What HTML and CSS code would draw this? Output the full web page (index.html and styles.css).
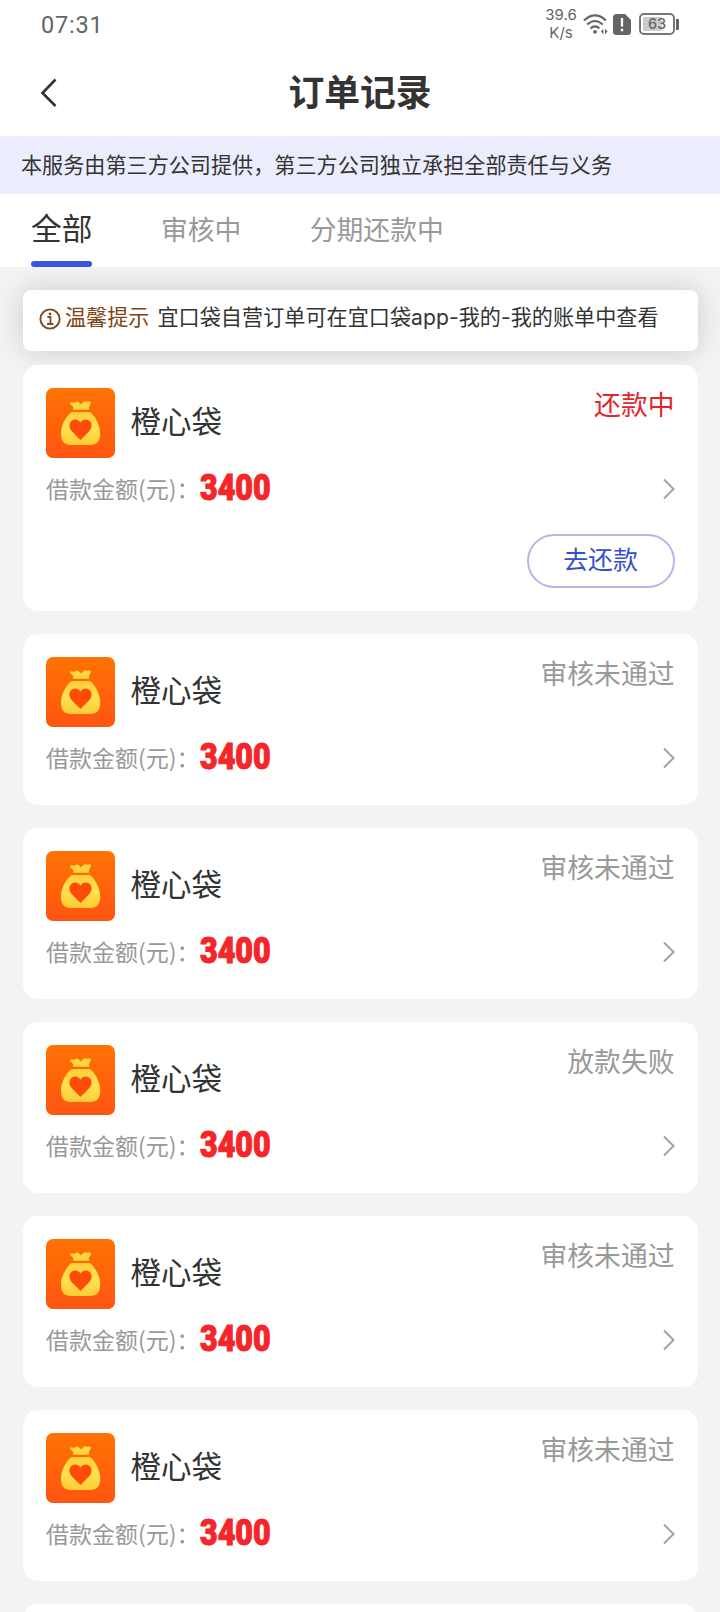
FILE: index.html
```html
<!DOCTYPE html>
<html lang="zh-CN">
<head>
<meta charset="utf-8">
<title>订单记录</title>
<link rel="stylesheet" href="styles.css">
</head>
<body>
<svg class="defs" width="0" height="0">
  <defs>
    <linearGradient id="tile" x1="0" y1="0" x2="0" y2="1"><stop offset="0" stop-color="#ff7303"/><stop offset="1" stop-color="#ff5512"/></linearGradient>
    <linearGradient id="gold" x1="0" y1="0" x2="0" y2="1"><stop offset="0" stop-color="#ffcf38"/><stop offset=".5" stop-color="#ffe250"/><stop offset="1" stop-color="#ffcb32"/></linearGradient>
  </defs>
  <symbol id="bag" viewBox="0 0 69 70">
    <rect width="69" height="70" rx="7" fill="url(#tile)"/>
    <path d="M24.3 16.5Q23.6 14.2 26 14.3Q28.6 15.4 30 13.8Q32 12.6 33.8 15.2Q35.2 17.2 36.8 14.6Q38.8 12.6 41 13.7Q43.6 12.6 44.8 14Q45.2 16.4 43.4 18Q42.4 19.2 43.2 21.8H27Q28.2 18.4 24.3 16.5Z" fill="#ffd53c"/>
    <path d="M26.5 24H43Q44.5 24 45.5 25.2C50.5 30.5 54.2 38 54.2 45.5C54.2 53.5 50.8 57 44 57H25C18.5 57 15 53.5 15 45.5C15 38 18.7 30.5 24 25.2Q25 24 26.5 24Z" fill="url(#gold)"/>
    <path d="M34.5 52L25.8 43.2C22.5 39.6 22.8 35 25.6 32.8C28.5 30.5 32.4 31.2 34.5 34.4C36.6 31.2 40.5 30.5 43.4 32.8C46.2 35 46.5 39.6 43.2 43.2Z" fill="#ff4c08"/>
  </symbol>
  <symbol id="next" viewBox="0 0 14 22"><path d="M2 1.5L11.5 11L2 20.5" fill="none" stroke="#a3a3a3" stroke-width="2"/></symbol>
</svg>
<header class="statusbar">
  <span class="clock">07:31</span>
  <div class="indicators">
    <div class="speed"><span>39.6</span><span>K/s</span></div>
    <svg class="wifi" width="26" height="23" viewBox="0 0 26 23">
      <g fill="none" stroke="#656565" stroke-width="2.1"><path d="M1 7.6Q12 -2.7 23 7.6"/><path d="M4.2 11.6Q12 4.4 19.8 11.6"/><path d="M7.6 15.4Q12 11.2 16.4 15.4"/></g>
      <circle cx="12" cy="18.8" r="1.9" fill="#656565"/><path d="M20.4 15.8v5.4l-2.6-2.6zM22 15.8v5.4l2.6-2.6z" fill="#656565"/>
    </svg>
    <svg class="sim" width="18" height="21" viewBox="0 0 18 21"><path d="M3.5 0H12L18 6V17.5Q18 21 14.5 21H3.5Q0 21 0 17.5V3.5Q0 0 3.5 0Z" fill="#656565"/><path d="M9 4V12.5M9 14.7V17.2" stroke="#fff" stroke-width="2.3"/></svg>
    <div class="battery"><span>63</span></div><i class="cap"></i>
  </div>
</header>
<nav class="titlebar">
  <svg class="back" width="18" height="30" viewBox="0 0 18 30"><path d="M15.5 1.5L2.5 15L15.5 28" fill="none" stroke="#333" stroke-width="2.6"/></svg>
  <h1>订单记录</h1>
</nav>
<p class="notice">本服务由第三方公司提供，第三方公司独立承担全部责任与义务</p>
<div class="tabs">
  <div class="tab active">全部</div><div class="tab">审核中</div><div class="tab">分期还款中</div>
</div>
<main>
  <aside class="tip">
    <svg width="22" height="22" viewBox="0 0 22 22"><circle cx="11" cy="11" r="9.6" fill="none" stroke="#7d4b22" stroke-width="1.9"/><path d="M8.4 9H11.4V16M8 16H14.4" fill="none" stroke="#7d4b22" stroke-width="1.8"/><circle cx="11" cy="5.9" r="1.4" fill="#7d4b22"/></svg>
    <b>温馨提示</b><span class="message">宜口袋自营订单可在宜口袋app-我的-我的账单中查看</span>
  </aside>
  <section class="card first">
    <div class="top"><svg class="logo"><use href="#bag"/></svg><h2>橙心袋</h2><span class="state due">还款中</span></div>
    <div class="row"><span class="label">借款金额(元)：</span><span class="sum">3400</span><svg class="next"><use href="#next"/></svg></div>
    <button class="pay">去还款</button>
  </section>
  <section class="card">
    <div class="top"><svg class="logo"><use href="#bag"/></svg><h2>橙心袋</h2><span class="state">审核未通过</span></div>
    <div class="row"><span class="label">借款金额(元)：</span><span class="sum">3400</span><svg class="next"><use href="#next"/></svg></div>
  </section>
  <section class="card">
    <div class="top"><svg class="logo"><use href="#bag"/></svg><h2>橙心袋</h2><span class="state">审核未通过</span></div>
    <div class="row"><span class="label">借款金额(元)：</span><span class="sum">3400</span><svg class="next"><use href="#next"/></svg></div>
  </section>
  <section class="card">
    <div class="top"><svg class="logo"><use href="#bag"/></svg><h2>橙心袋</h2><span class="state">放款失败</span></div>
    <div class="row"><span class="label">借款金额(元)：</span><span class="sum">3400</span><svg class="next"><use href="#next"/></svg></div>
  </section>
  <section class="card">
    <div class="top"><svg class="logo"><use href="#bag"/></svg><h2>橙心袋</h2><span class="state">审核未通过</span></div>
    <div class="row"><span class="label">借款金额(元)：</span><span class="sum">3400</span><svg class="next"><use href="#next"/></svg></div>
  </section>
  <section class="card">
    <div class="top"><svg class="logo"><use href="#bag"/></svg><h2>橙心袋</h2><span class="state">审核未通过</span></div>
    <div class="row"><span class="label">借款金额(元)：</span><span class="sum">3400</span><svg class="next"><use href="#next"/></svg></div>
  </section>
  <section class="card peek"></section>
</main>
</body>
</html>
```
FILE: styles.css
```css
* { box-sizing: border-box; margin: 0; }
body {
  height: 1612px;
  overflow: hidden;
  display: flex;
  flex-direction: column;
  background: #f3f3f3;
  color: #333;
  font-family: "Noto Sans CJK SC", sans-serif;
  font-weight: 400;
  white-space: nowrap;
}
.defs { display: block; height: 0; flex: none; }
.statusbar {
  flex: none;
  height: 48px;
  padding: 0 41px 0 41px;
  display: flex;
  justify-content: space-between;
  align-items: center;
  background: #fff;
  color: #656565;
  font-family: Roboto, sans-serif;
}
.clock { font-size: 23.5px; letter-spacing: .8px; line-height: 48px; padding-top: 1px; }
.indicators { display: flex; align-items: center; }
.speed {
  display: flex;
  flex-direction: column;
  align-items: center;
  font: 15px/18px Inter, sans-serif;
  width: 32px;
  margin-right: 6px;
  padding-bottom: 1px;
}
.sim { margin-left: 4px; }
.battery {
  margin-left: 8px;
  width: 36px;
  height: 22px;
  border: 2px solid #777;
  border-radius: 5px;
  background: linear-gradient(90deg, #ccc 0 19px, transparent 19px) 2px 2px / 28px 14px no-repeat;
  display: flex;
  align-items: center;
  justify-content: center;
  font: 500 14.5px/14px Inter, sans-serif;
}
.cap { width: 3px; height: 11px; background: #656565; margin-left: 1px; border-radius: 0 1px 1px 0; }
.titlebar {
  flex: none;
  height: 88px;
  display: grid;
  grid-template-columns: 60px 1fr 60px;
  align-items: center;
  background: #fff;
}
.back { margin-left: 40px; margin-top: 1px; }
h1 { font-size: 35.8px; line-height: 50px; font-weight: 700; text-align: center; padding-bottom: 4px; }
.notice {
  flex: none;
  height: 58px;
  padding-left: 21px;
  background: #ebedfc;
  font-size: 21.12px;
  line-height: 56px;
}
.tabs { flex: none; height: 73px; display: flex; background: #fff; padding-left: 31px; }
.tab { font-size: 26.8px; line-height: 70px; color: #999; margin-right: 68.5px; }
.tab.active {
  display: flex;
  flex-direction: column;
  font-size: 30.7px;
  line-height: 65px;
  color: #333;
}
.tab.active::after { content: ""; height: 6px; margin-top: 2px; border-radius: 3px; background: #3b54d9; }
main {
  flex: 1;
  min-height: 0;
  overflow: hidden;
  display: flex;
  flex-direction: column;
  padding: 23px 22.5px 0 23px;
  gap: 23px;
}
.tip {
  flex: none;
  height: 61px;
  margin-bottom: -9px;
  padding: 0 16px 6px;
  display: flex;
  align-items: center;
  background: #fff;
  border-radius: 8px;
  font-size: 21.12px;
  line-height: 30px;
  box-shadow: 0 0 28px rgba(0, 0, 0, .17);
}
.tip svg { margin-top: 2px; }
.tip b { color: #7d4516; font-weight: 400; margin: 0 8px 0 4px; }
.tip b, .message { font-family: Inter, "Noto Sans CJK SC", sans-serif; padding-top: 1px; }
.message { letter-spacing: .03px; }
.card {
  position: relative;
  height: 171px;
  flex: none;
  padding: 23px 23px 0;
  border-radius: 15px;
  background: #fff;
  display: flex;
  flex-direction: column;
}
.card.first { height: 246px; }
.card.peek { height: 40px; }
.top { height: 70px; display: flex; align-items: center; }
.logo { width: 69px; height: 70px; }
h2 { font-size: 30.5px; line-height: 44px; font-weight: 400; margin-left: 15.5px; padding-bottom: 6px; }
.state { margin-left: auto; align-self: flex-start; font-size: 26.8px; line-height: 32px; color: #999; }
.state.due { color: #e0282b; }
.row { height: 62px; display: flex; align-items: center; color: #999; }
.label { font-size: 23px; width: 153.5px; padding-bottom: 2px; }
.sum {
  font: 900 36px/40px Roboto, sans-serif;
  color: #f5252a;
  transform: scaleX(.845);
  transform-origin: left;
  -webkit-text-stroke: 1.1px #f5252a;
  padding-bottom: 3px;
}
.next { width: 14px; height: 22px; margin-left: auto; margin-right: -1px; }
.pay {
  width: 148px;
  height: 54px;
  margin-top: 14px;
  align-self: flex-end;
  padding: 0 0 6px;
  border: 2px solid #b0b8e8;
  border-radius: 27px;
  background: #fff;
  color: #3450c8;
  font: 24.9px/36px "Noto Sans CJK SC", sans-serif;
}
```
